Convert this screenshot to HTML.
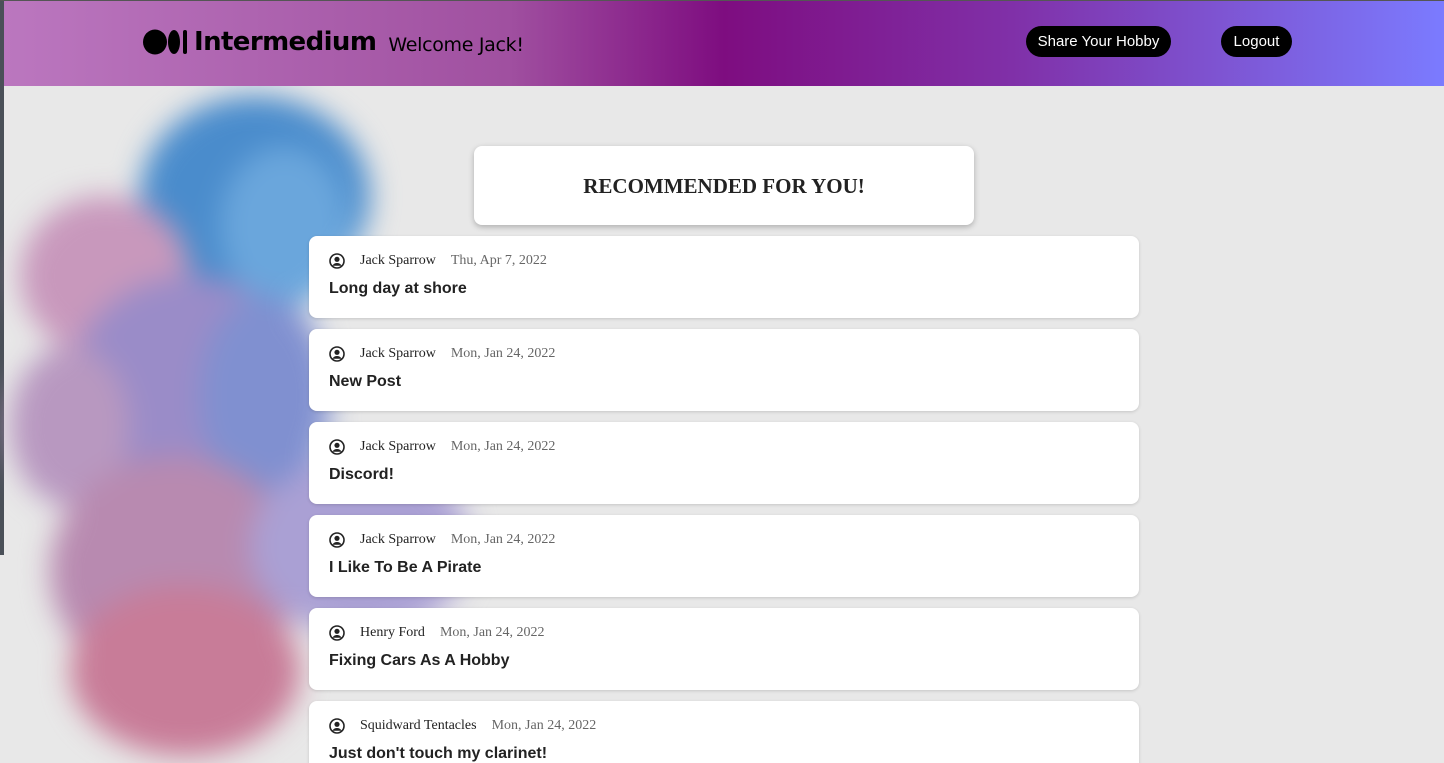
<!DOCTYPE html>
<html><head><style>
*{margin:0;padding:0;box-sizing:border-box}
html,body{width:1444px;height:763px;overflow:hidden}
body{background:#e8e8e8;font-family:"Liberation Sans",sans-serif;position:relative}
.strip{position:absolute;left:0;top:0;width:4px;height:555px;background:#4a5058}
.hdr{position:absolute;left:4px;top:1px;width:1440px;height:85px;background:linear-gradient(90deg,#bb77bf 0%,#a050a0 35%,#7e0d80 50%,#8030a8 70%,#7b7bff 100%)}
.topline{position:absolute;left:0;top:0;width:1444px;height:1px;background:#555}
.logo{position:absolute;left:143px;top:27px;display:flex;align-items:center}
.logo .t{font-family:"DejaVu Sans",sans-serif;font-weight:bold;font-size:26px;color:#000;margin-left:3px;letter-spacing:-0.6px}
.logo .w{font-family:"DejaVu Sans",sans-serif;font-size:19px;color:#000;margin-left:12px;margin-top:6px;letter-spacing:-0.3px}
.btn{position:absolute;top:26px;height:31px;background:#000;color:#fff;border-radius:16px;font-size:15px;line-height:31px;text-align:center}
.ink{position:absolute;left:0;top:86px;width:540px;height:677px;overflow:hidden;filter:blur(14px)}
.b{position:absolute;border-radius:50%}
.rec{position:absolute;left:474px;top:146px;width:500px;height:79px;background:#fff;border-radius:8px;box-shadow:0 2px 6px rgba(0,0,0,.25);text-align:center;font-family:"Liberation Serif",serif;font-weight:bold;font-size:21px;line-height:80px;color:#222}
.card{position:absolute;left:309px;width:830px;height:82px;background:#fff;border-radius:8px;box-shadow:0 1px 3px rgba(0,0,0,.15)}
.meta{position:absolute;left:20px;top:17px;display:flex;align-items:center;font-family:"Liberation Serif",serif;font-size:14px;color:#222}
.meta svg{margin-right:15px}
.meta .d{color:#666;margin-left:15px}
.ttl{position:absolute;left:20px;top:44px;font-weight:bold;font-size:16px;color:#222}
</style></head><body>
<div class="strip"></div>
<div class="ink">
<div class="b" style="left:140px;top:10px;width:230px;height:200px;background:#4a8ccc"></div>
<div class="b" style="left:220px;top:60px;width:130px;height:160px;background:#6aa6dc"></div>
<div class="b" style="left:20px;top:110px;width:170px;height:160px;background:#c898bc"></div>
<div class="b" style="left:70px;top:190px;width:240px;height:230px;background:#9a8cc8"></div>
<div class="b" style="left:200px;top:210px;width:130px;height:200px;background:#8090d0"></div>
<div class="b" style="left:10px;top:260px;width:120px;height:160px;background:#b898c0"></div>
<div class="b" style="left:50px;top:370px;width:250px;height:230px;background:#b88ab0"></div>
<div class="b" style="left:250px;top:370px;width:220px;height:180px;background:#aaa0d4"></div>
<div class="b" style="left:70px;top:500px;width:230px;height:170px;background:#c87c98"></div>
</div>
<div class="topline"></div>
<div class="hdr"></div>
<div class="logo">
<svg width="48" height="26" viewBox="0 0 48 26"><ellipse cx="12" cy="13" rx="12" ry="12.5"/><ellipse cx="31" cy="13" rx="6" ry="12"/><rect x="40" y="1" width="4" height="24" rx="2"/></svg>
<span class="t">Intermedium</span><span class="w">Welcome Jack!</span>
</div>
<div class="btn" style="left:1026px;width:145px">Share Your Hobby</div>
<div class="btn" style="left:1221px;width:71px">Logout</div>
<div class="rec">RECOMMENDED FOR YOU!</div>
<div class="card" style="top:236px"><div class="meta"><svg width="16" height="16" viewBox="0 0 16 16"><circle cx="8" cy="8" r="7" fill="none" stroke="#222" stroke-width="1.6"/><circle cx="8" cy="6.3" r="2.6" fill="#222"/><path d="M3.3 12.8c1.2-2 2.8-2.8 4.7-2.8s3.5.8 4.7 2.8" fill="#222"/></svg>Jack Sparrow<span class="d">Thu, Apr 7, 2022</span></div><div class="ttl">Long day at shore</div></div>
<div class="card" style="top:329px"><div class="meta"><svg width="16" height="16" viewBox="0 0 16 16"><circle cx="8" cy="8" r="7" fill="none" stroke="#222" stroke-width="1.6"/><circle cx="8" cy="6.3" r="2.6" fill="#222"/><path d="M3.3 12.8c1.2-2 2.8-2.8 4.7-2.8s3.5.8 4.7 2.8" fill="#222"/></svg>Jack Sparrow<span class="d">Mon, Jan 24, 2022</span></div><div class="ttl">New Post</div></div>
<div class="card" style="top:422px"><div class="meta"><svg width="16" height="16" viewBox="0 0 16 16"><circle cx="8" cy="8" r="7" fill="none" stroke="#222" stroke-width="1.6"/><circle cx="8" cy="6.3" r="2.6" fill="#222"/><path d="M3.3 12.8c1.2-2 2.8-2.8 4.7-2.8s3.5.8 4.7 2.8" fill="#222"/></svg>Jack Sparrow<span class="d">Mon, Jan 24, 2022</span></div><div class="ttl">Discord!</div></div>
<div class="card" style="top:515px"><div class="meta"><svg width="16" height="16" viewBox="0 0 16 16"><circle cx="8" cy="8" r="7" fill="none" stroke="#222" stroke-width="1.6"/><circle cx="8" cy="6.3" r="2.6" fill="#222"/><path d="M3.3 12.8c1.2-2 2.8-2.8 4.7-2.8s3.5.8 4.7 2.8" fill="#222"/></svg>Jack Sparrow<span class="d">Mon, Jan 24, 2022</span></div><div class="ttl">I Like To Be A Pirate</div></div>
<div class="card" style="top:608px"><div class="meta"><svg width="16" height="16" viewBox="0 0 16 16"><circle cx="8" cy="8" r="7" fill="none" stroke="#222" stroke-width="1.6"/><circle cx="8" cy="6.3" r="2.6" fill="#222"/><path d="M3.3 12.8c1.2-2 2.8-2.8 4.7-2.8s3.5.8 4.7 2.8" fill="#222"/></svg>Henry Ford<span class="d">Mon, Jan 24, 2022</span></div><div class="ttl">Fixing Cars As A Hobby</div></div>
<div class="card" style="top:701px"><div class="meta"><svg width="16" height="16" viewBox="0 0 16 16"><circle cx="8" cy="8" r="7" fill="none" stroke="#222" stroke-width="1.6"/><circle cx="8" cy="6.3" r="2.6" fill="#222"/><path d="M3.3 12.8c1.2-2 2.8-2.8 4.7-2.8s3.5.8 4.7 2.8" fill="#222"/></svg>Squidward Tentacles<span class="d">Mon, Jan 24, 2022</span></div><div class="ttl">Just don't touch my clarinet!</div></div>
</body></html>
